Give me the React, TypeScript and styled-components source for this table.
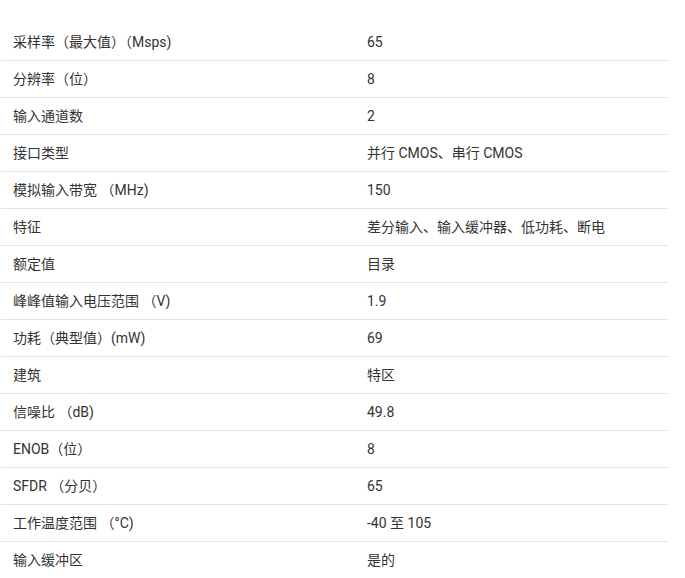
import React from 'react';
import styled, { createGlobalStyle } from 'styled-components';

const GlobalStyle = createGlobalStyle`
  html, body {
    margin: 0;
    padding: 0;
    background: #ffffff;
  }
  body {
    font-family: Roboto, "Noto Sans CJK SC", sans-serif;
    color: #333333;
  }
`;

const Page = styled.div`
  padding: 24px 0 0 1px;
  width: 667px;
`;

const SpecTable = styled.div`
  display: flex;
  flex-direction: column;
`;

const SpecRow = styled.div`
  display: grid;
  grid-template-columns: 354px 1fr;
  height: 36px;
  align-items: center;
  border-bottom: 1px solid #e3e3e3;
`;

const SpecCell = styled.div`
  padding: 0 12px;
  font-size: 14px;
  line-height: 20px;
  white-space: pre;
`;

const specs: [string, string][] = [
  ['采样率（最大值）（Msps)', '65'],
  ['分辨率（位）', '8'],
  ['输入通道数', '2'],
  ['接口类型', '并行 CMOS、串行 CMOS'],
  ['模拟输入带宽 （MHz)', '150'],
  ['特征', '差分输入、输入缓冲器、低功耗、断电'],
  ['额定值', '目录'],
  ['峰峰值输入电压范围 （V)', '1.9'],
  ['功耗（典型值）(mW)', '69'],
  ['建筑', '特区'],
  ['信噪比 （dB)', '49.8'],
  ['ENOB（位）', '8'],
  ['SFDR （分贝）', '65'],
  ['工作温度范围 （°C)', '-40 至 105'],
  ['输入缓冲区', '是的'],
];

const App: React.FC = () => {
  return (
    <>
      <GlobalStyle />
      <Page>
        <SpecTable>
          {specs.map(([label, value]) => (
            <SpecRow key={label}>
              <SpecCell>{label}</SpecCell>
              <SpecCell>{value}</SpecCell>
            </SpecRow>
          ))}
        </SpecTable>
      </Page>
    </>
  );
};

export default App;
